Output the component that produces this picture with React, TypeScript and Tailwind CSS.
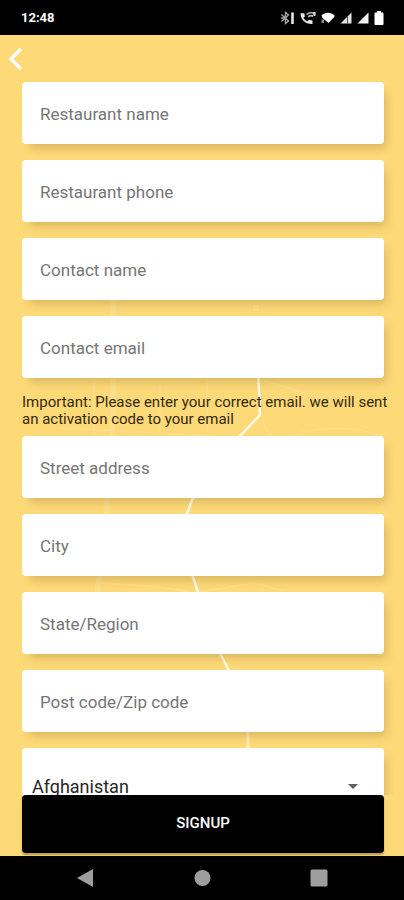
import React, { useState } from "react";

type Field = {
  id: string;
  label: string;
  type?: string;
};

const contactFields: Field[] = [
  { id: "restaurant-name", label: "Restaurant name" },
  { id: "restaurant-phone", label: "Restaurant phone", type: "tel" },
  { id: "contact-name", label: "Contact name" },
  { id: "contact-email", label: "Contact email", type: "email" },
];

const addressFields: Field[] = [
  { id: "street", label: "Street address" },
  { id: "city", label: "City" },
  { id: "state", label: "State/Region" },
  { id: "post-code", label: "Post code/Zip code" },
];

function StatusBar() {
  return (
    <div className="flex h-[35px] shrink-0 items-center justify-between bg-black pt-px pr-5 pl-[21px] text-white">
      <span className="text-[13px] leading-4 font-bold">12:48</span>
      <div className="flex items-center gap-[5px]" aria-hidden="true">
        {/* bluetooth with battery level */}
        <svg width="15" height="14" viewBox="0 0 15 14" fill="none" stroke="#a3a3a3" strokeWidth="1.4">
          <path d="M1.5 3.500l7 6.500L5.500 12.500V1.500l3 2.500-7 6.500M1 7h3" />
          <path d="M12.500 1.500v11.500" stroke="#e5e5e5" strokeWidth="2.600" />
        </svg>
        {/* wifi call */}
        <svg width="16" height="14" viewBox="0 0 16 14" fill="none">
          <path
            d="M.5 2.200h3.700l.8 3-1.500 1.500c.9 1.700 2.200 2.900 3.900 3.600L9 8.800l3.500.8v3.400C5.500 13.500.5 8.500.5 2.200z"
            fill="#e5e5e5"
          />
          <path d="M6.500 3.600c2.500-2.400 6-2.400 9-.6" stroke="#a3a3a3" strokeWidth="1.6" />
          <path d="M8.300 5.800c1.400-1.300 3.300-1.400 4.900-.5" stroke="#bdbdbd" strokeWidth="1.6" />
          <path d="M12.500 1h3v4h-1.800z" fill="#d4d4d4" />
        </svg>
        {/* wifi */}
        <svg width="14" height="14" viewBox="0 0 14 14" fill="#fff">
          <path d="M.5 4.500C4 .7 10 .7 13.500 4.500v1.300L7.500 12 1.500 7z" />
          <path d="M.5 8.500H3V12H.5z" fill="#8a8a8a" />
        </svg>
        <svg width="12" height="14" viewBox="0 0 12 14">
          <path d="M11.500 1.500v11H.5z" fill="#e5e5e5" />
          <path d="M7.500 5v7.500" stroke="#525252" />
        </svg>
        <svg width="12" height="14" viewBox="0 0 12 14">
          <path d="M11.500 1.500v11H.5z" fill="#f5f5f5" />
        </svg>
        <svg width="10" height="14" viewBox="0 0 10 14" fill="#fff">
          <path d="M3 0h4v1.500h1.500a1 1 0 0 1 1 1V13a1 1 0 0 1-1 1h-7a1 1 0 0 1-1-1V2.500a1 1 0 0 1 1-1H3z" />
        </svg>
      </div>
    </div>
  );
}

// Faint street map behind the form
function MapBackground() {
  return (
    <svg
      className="pointer-events-none absolute inset-0 h-full w-full"
      viewBox="0 0 404 821"
      preserveAspectRatio="xMidYMid slice"
      fill="none"
      aria-hidden="true"
    >
      <g stroke="#fff" strokeWidth="1.5" opacity="0.13">
        <path d="M113 265v115l-9 130-10 70" strokeWidth="6" />
        <path d="M94 345v60M160 345v55M207 345v55" />
        <path d="M60 393l60 3 90 5" />
        <path d="M262 385c10 25 20 25 40 12 30-6 60-4 80 4M262 345l60 18" />
        <path d="M100 548l60 4 34 6 60-10 30 8" />
        <path d="M256 270v6" strokeWidth="6" />
      </g>
      <path d="M258 335l2 45-20 21-48 64-5 14 6 63 5 15 23 63 8 16" stroke="#fffbea" strokeWidth="2.500" />
      <path d="M229 636l19 62v30" stroke="#fff3cf" strokeWidth="3" opacity="0.7" />
    </svg>
  );
}

function TextField({ id, label, type = "text" }: Field) {
  return (
    <label htmlFor={id} className="block shrink-0 rounded bg-white shadow-[5px_7px_10px_-3px_rgba(100,75,20,0.24)]">
      <input
        id={id}
        type={type}
        placeholder={label}
        aria-label={label}
        className="block h-[62px] w-full rounded bg-transparent px-[18px] pt-[2px] text-[17px] text-neutral-800 outline-none placeholder:text-[#757575]"
      />
    </label>
  );
}

export default function App() {
  const [country, setCountry] = useState("Afghanistan");

  return (
    <div className="flex h-screen flex-col bg-[#fdd978] font-['Roboto','Liberation_Sans',sans-serif]">
      <StatusBar />

      <main className="relative flex min-h-0 flex-1 flex-col">
        <MapBackground />

        <form className="relative flex min-h-0 flex-1 flex-col" onSubmit={(e) => e.preventDefault()}>
          <div className="flex h-[47px] shrink-0 items-center px-2">
            <button type="button" aria-label="Back" className="text-white">
              <svg width="16" height="24" viewBox="0 0 16 24" fill="none" stroke="currentColor" strokeWidth="3.500">
                <path d="M13 2L3 12l10 10" />
              </svg>
            </button>
          </div>

          <div className="flex min-h-0 flex-1 flex-col overflow-y-auto pr-5 pl-[22px] [scrollbar-width:none]">
            <div className="flex shrink-0 flex-col gap-4">
              {contactFields.map((field) => (
                <TextField key={field.id} {...field} />
              ))}
            </div>

            <p className="-mr-4 shrink-0 pt-4 pb-2 text-[15px] leading-[17px] text-[#33290f]">
              Important: Please enter your correct email. we will sent an activation code to your email
            </p>

            <div className="flex shrink-0 flex-col gap-4">
              {addressFields.map((field) => (
                <TextField key={field.id} {...field} />
              ))}

              <label
                htmlFor="country"
                className="relative block shrink-0 rounded bg-white shadow-[5px_7px_10px_-3px_rgba(100,75,20,0.24)]"
              >
                <select
                  id="country"
                  aria-label="Country"
                  value={country}
                  onChange={(e) => setCountry(e.target.value)}
                  className="block h-[76px] w-full appearance-none rounded bg-transparent px-[10px] text-[18px] text-neutral-800 outline-none"
                >
                  <option>Afghanistan</option>
                  <option>Albania</option>
                  <option>Algeria</option>
                </select>
                <svg
                  className="pointer-events-none absolute top-9 right-[26px]"
                  width="10"
                  height="5"
                  viewBox="0 0 10 5"
                  fill="#616161"
                  aria-hidden="true"
                >
                  <path d="M0 0h10L5 5z" />
                </svg>
              </label>
            </div>
          </div>

          <div className="shrink-0 pr-5 pb-[3px] pl-[22px]">
            <button
              type="submit"
              className="block h-[58px] w-full rounded-sm bg-black pb-[2px] text-[15px] font-medium text-white shadow-[0_2px_2px_rgba(0,0,0,0.3)]"
            >
              SIGNUP
            </button>
          </div>
        </form>
      </main>

      <nav className="flex h-11 shrink-0 items-center justify-around bg-black px-[26px] text-[#9e9e9e]">
        <button type="button" aria-label="Go back">
          <svg width="18" height="18" viewBox="0 0 18 18" fill="currentColor">
            <path d="M17 0v18L1 9z" />
          </svg>
        </button>
        <button type="button" aria-label="Home">
          <svg width="18" height="18" viewBox="0 0 18 18" fill="currentColor">
            <circle cx="9.500" cy="9" r="8" />
          </svg>
        </button>
        <button type="button" aria-label="Recent apps">
          <svg width="18" height="18" viewBox="0 0 18 18" fill="currentColor">
            <rect x="0.500" y="0.500" width="17" height="17" rx="1.500" />
          </svg>
        </button>
      </nav>
    </div>
  );
}
